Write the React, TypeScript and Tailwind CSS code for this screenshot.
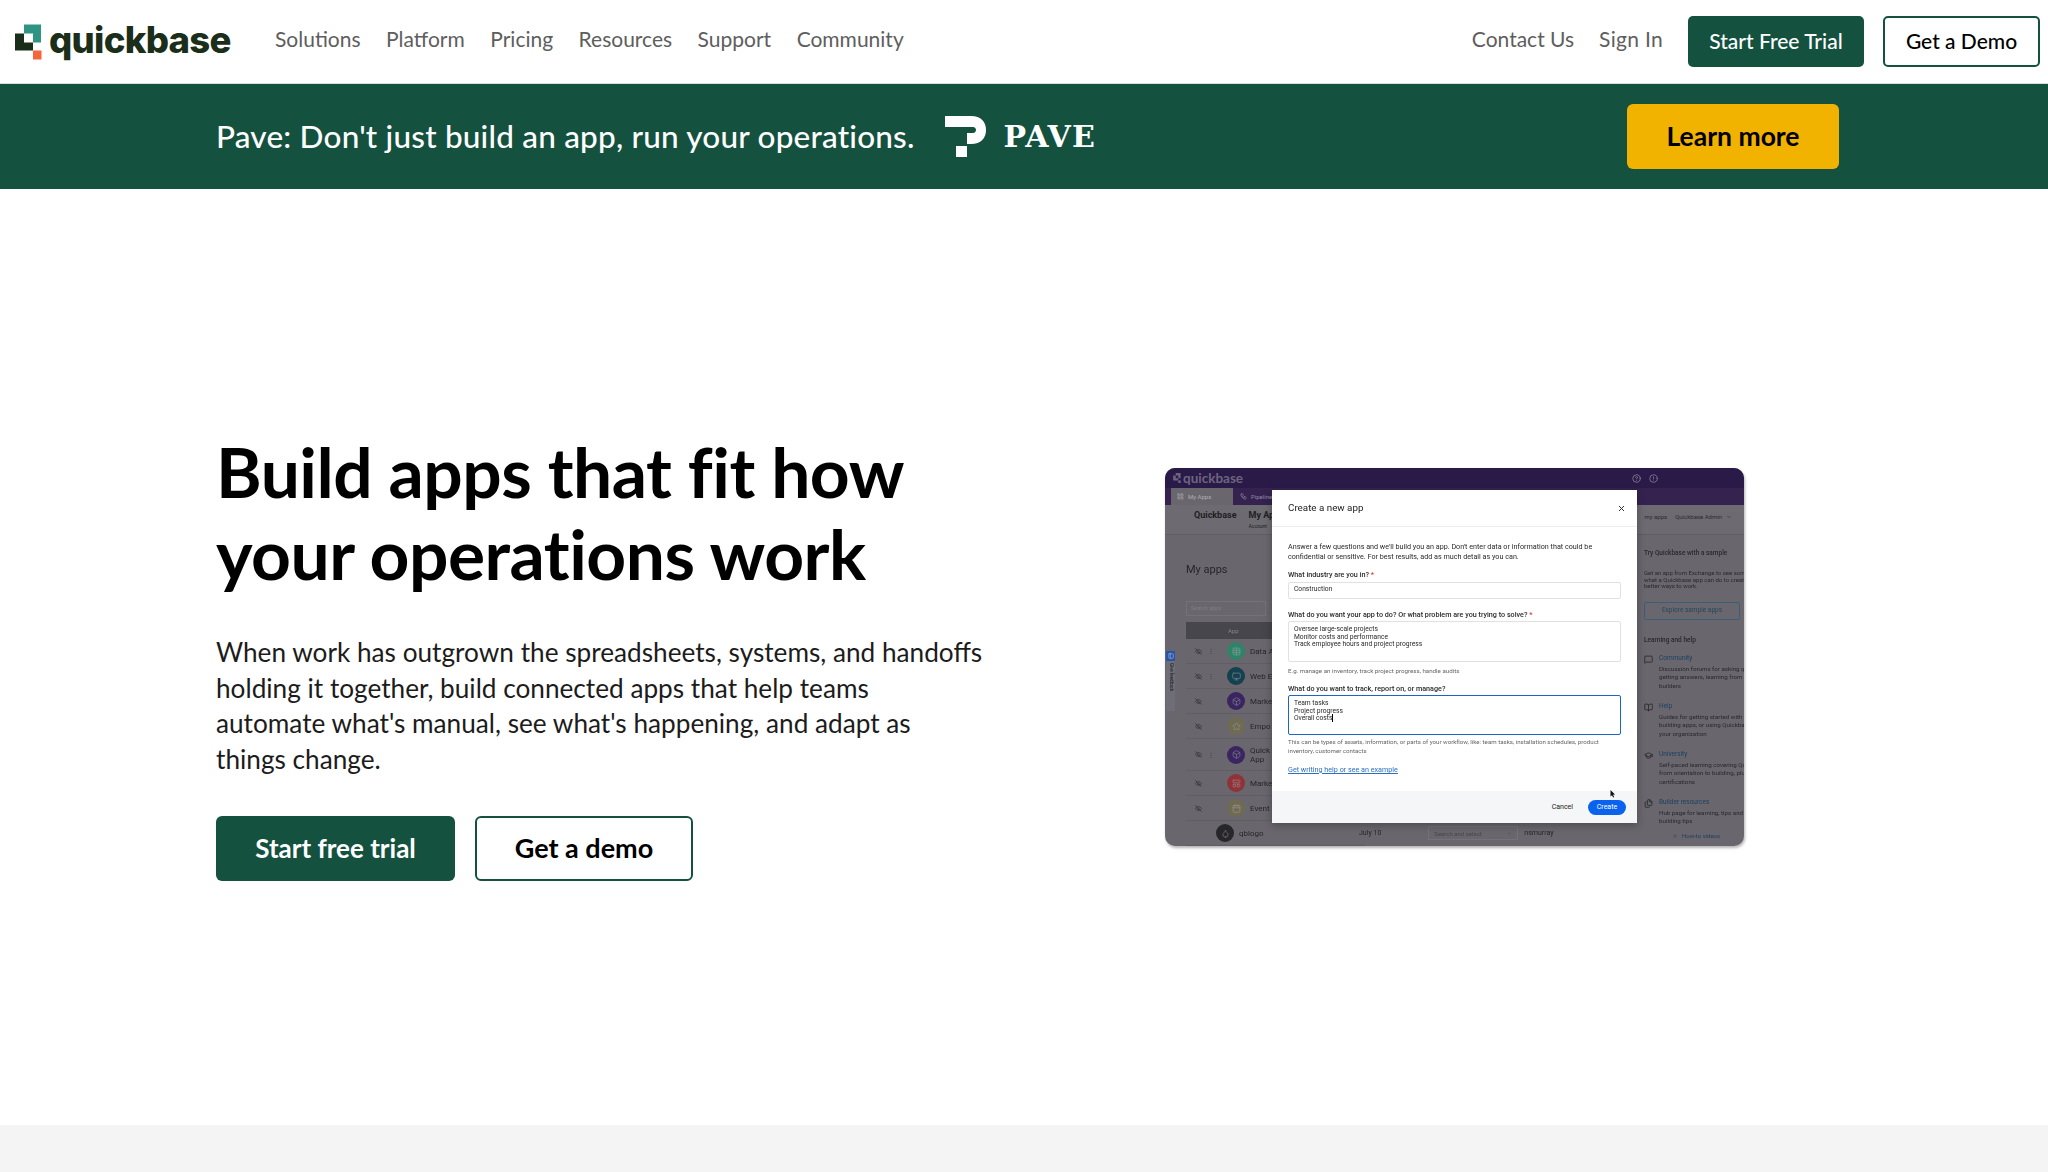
import { EyeOff, LayoutGrid, Workflow, X, MessageSquare, BookOpen, GraduationCap, Files, ChevronsUp, HelpCircle, AlertCircle, ChevronDown, Table, Monitor, Box, Star, LayoutPanelTop, Calendar, Droplet, PanelLeft } from 'lucide-react';

const navLinks = ['Solutions', 'Platform', 'Pricing', 'Resources', 'Support', 'Community'];

// rows of the dimmed app table behind the modal
const appRows = [
  { name: 'Data A', color: 'bg-[#2f8468]', Icon: Table, dots: true, h: 'h-[25px]' },
  { name: 'Web E', color: 'bg-[#14414f]', Icon: Monitor, dots: true, h: 'h-[25px]' },
  { name: 'Marke', color: 'bg-[#3a2560]', Icon: Box, dots: false, h: 'h-[25px]' },
  { name: 'Empo', color: 'bg-[#6f6a52]', Icon: Star, dots: false, h: 'h-[25px]' },
  { name: 'Quick App', color: 'bg-[#3a2560]', Icon: Box, dots: true, h: 'h-[32px]' },
  { name: 'Marke', color: 'bg-[#8f3338]', Icon: LayoutPanelTop, dots: false, h: 'h-[25px]' },
  { name: 'Event', color: 'bg-[#6f6a52]', Icon: Calendar, dots: false, h: 'h-[25px]' },
  { name: 'qblogo', color: 'bg-[#26262b]', Icon: Droplet, dots: false, h: 'h-[25px]' },
];

const helpLinks = [
  { title: 'Community', Icon: MessageSquare, text: 'Discussion forums for asking questions, getting answers, learning from fellow builders' },
  { title: 'Help', Icon: BookOpen, text: 'Guides for getting started with apps, building apps, or using Quickbase at your organization' },
  { title: 'University', Icon: GraduationCap, text: 'Self-paced learning covering Quickbase, from orientation to building, plus certifications' },
  { title: 'Builder resources', Icon: Files, text: 'Hub page for learning, tips and app building tips' },
];

function Logo() {
  return (
    <div className="flex w-[217px] shrink-0 items-center pb-[3px]">
      <svg width="27" height="36" viewBox="15 23 27 35" className="mt-[3px] shrink-0">
        <polygon points="24,23 41,23 41,41 33,41 33,32 24,32" fill="#2f9484" />
        <polygon points="15,32 24,32 24,41 33,41 33,49 15,49" fill="#1a2e1a" />
        <rect x="33" y="49" width="8.5" height="9" fill="#f4653a" />
      </svg>
      <span className="ml-[7px] font-['Inter'] text-[36.5px] leading-none font-extrabold tracking-[-0.7px] text-[#1a2e1a]">quickbase</span>
    </div>
  );
}

function PaveLogo() {
  return (
    <div className="flex items-center">
      <svg width="42" height="42" viewBox="24 15 42 42" className="shrink-0">
        <path d="M24 15 H50 C60 15 65 21 65 29 C65 37 60 43 50 43 H46 V32 H52 C54 32 55 30.5 55 29 C55 27.5 54 26 52 26 H24 Z" fill="#fff" />
        <path d="M46 32 V43 H46 V56 H35 V45 H46 V32 Z" fill="#fff" />
      </svg>
      <span className="ml-[17px] font-['DejaVu_Serif'] text-[30px] leading-none font-bold tracking-[1.2px] text-white">PAVE</span>
    </div>
  );
}

function AppMock() {
  return (
    <div className="relative h-[378px] w-[579px] shrink-0 overflow-hidden rounded-[10px] bg-[#69676d] font-['Roboto'] shadow-[1px_2px_3px_rgba(0,0,0,0.3)]">
      <div className="flex h-full flex-col blur-[0.35px]">
        {/* purple top bar */}
        <div className="flex h-[22px] items-center justify-between bg-[#2a1a48] pr-[86px] pl-[8px]">
          <span className="flex items-center gap-[2px] font-['Lato'] text-[13.5px] font-bold text-[#6d6580]">
            <svg width="8" height="10" viewBox="15 23 27 35">
              <polygon points="24,23 41,23 41,41 33,41 33,32 24,32" fill="#6d6580" />
              <polygon points="15,32 24,32 24,41 33,41 33,49 15,49" fill="#6d6580" />
              <rect x="33" y="49" width="8.5" height="9" fill="#6d6580" />
            </svg>
            quickbase
          </span>
          <div className="flex items-center gap-2 text-[#8d87a0]">
            <HelpCircle size={9} />
            <AlertCircle size={9} />
          </div>
        </div>
        <div className="flex h-[20px] items-end bg-[#35224f] pl-[6px]">
          <div className="flex h-[17px] w-[62px] items-center gap-1 bg-[#69676d] pl-[6px] text-[6px] text-[#b0aeb4]">
            <LayoutGrid size={7} /> My Apps
          </div>
          <div className="flex h-[17px] items-center gap-1 pl-[7px] text-[6px] text-[#8f88a3]">
            <Workflow size={7} /> Pipelines
          </div>
        </div>
        <div className="flex h-[34px] items-start justify-between border-b border-[#5f5d63] bg-[#6d6b71] pt-[5px] pr-[12px] pl-[29px] text-[#1f1e24]">
          <div className="flex gap-[12px] text-[9px] font-bold">
            <span className="leading-[10px]">Quickbase</span>
            <span className="leading-[10px]">My Apps<br /><span className="text-[5px] font-normal">Account</span></span>
          </div>
          <span className="mt-[2px] flex items-center gap-1 text-[6px] text-[#2b2a30]">
            my apps <span className="ml-1">Quickbase Admin</span> <ChevronDown size={6} />
          </span>
        </div>
        <div className="flex flex-1 justify-between">
          {/* table */}
          <div className="w-[200px] pt-[27px] pl-[21px]">
            <div className="text-[11px] leading-[15px] text-[#26252b]">My apps</div>
            <div className="mt-[24px] flex h-[15px] w-[80px] items-center border border-[#747279] pl-1 text-[5.5px] text-[#807e85]">Search apps</div>
            <div className="mt-[6px] flex h-[17px] items-center bg-[#47464d] pl-[42px] text-[6px] text-[#85838a]">App</div>
            {appRows.map((row, i) => (
              <div key={i} className={`flex items-center border-b border-[#605e64] ${row.h}`}>
                <EyeOff size={7} className="ml-[9px] text-[#2a292e]" />
                <span className="ml-[6px] w-[4px] text-[6px] leading-none text-[#333238]">{row.dots ? '⋮' : ''}</span>
                <span className={`ml-[15px] flex size-[18px] shrink-0 items-center justify-center rounded-full ${row.color}`}>
                  <row.Icon size={9} className="text-[#a9a7ad] opacity-60" />
                </span>
                <span className="ml-[5px] w-[30px] shrink-0 text-[8px] leading-[9px] text-[#26252b]">{row.name}</span>
                {row.name === 'qblogo' && (
                  <>
                    <span className="ml-[90px] shrink-0 text-[7px] whitespace-nowrap text-[#26252b]">July 10</span>
                    <span className="ml-[47px] flex h-[14px] w-[90px] shrink-0 items-center justify-between border border-[#747279] px-[5px] text-[6px] whitespace-nowrap text-[#47464c]">
                      Search and select <ChevronDown size={5} />
                    </span>
                    <span className="ml-[6px] shrink-0 text-[7px] text-[#26252b]">nsmurray</span>
                  </>
                )}
              </div>
            ))}
          </div>
          {/* help column */}
          <div className="w-[101px] overflow-hidden pt-[14px] pl-[1px] text-[#29282e]">
            <div className="text-[6.5px] font-medium whitespace-nowrap">Try Quickbase with a sample</div>
            <div className="mt-[11px] w-[112px] text-[6px] leading-[6.8px]">Get an app from Exchange to see some of what a Quickbase app can do to create better ways to work.</div>
            <div className="mt-[12px] flex h-[18px] w-[96px] items-center justify-center rounded-[2px] border border-[#3a5f78] text-[6.5px] text-[#26465c]">Explore sample apps</div>
            <div className="mt-[16px] text-[6.5px] font-medium">Learning and help</div>
            <div className="mt-[8px]">
              {helpLinks.map(({ title, Icon, text }) => (
                <div key={title} className="flex h-[48px] gap-[6px]">
                  <Icon size={9} className="mt-[1px] shrink-0 text-[#222126]" />
                  <div className="w-[112px] shrink-0">
                    <div className="text-[6.5px] leading-[8px] text-[#1d3f60]">{title}</div>
                    <div className="mt-[3px] text-[6.2px] leading-[8.6px]">{text}</div>
                  </div>
                </div>
              ))}
            </div>
          </div>
        </div>
      </div>

      {/* feedback tab */}
      <div className="absolute top-[183px] left-[1px] flex h-[60px] w-[9px] flex-col items-center rounded-r-[1px] bg-[#6f6e78]">
        <div className="flex h-[10px] w-full items-center justify-center bg-[#2855a5] text-[#b9c7e2]">
          <PanelLeft size={6} />
        </div>
        <span className="mt-[2px] text-[4.5px] whitespace-nowrap text-[#1c1c20] [writing-mode:vertical-rl]">Give feedback</span>
      </div>

      {/* how-to pill */}
      <div className="absolute bottom-[6px] left-[507px] flex items-center gap-1 text-[6px] text-[#1d3f60]">
        <ChevronsUp size={6} /> How-to videos
      </div>

      {/* modal */}
      <div className="absolute top-[22px] left-[107px] flex h-[333px] w-[365px] flex-col bg-white text-[#2a2a2a] shadow-[0_2px_8px_rgba(0,0,0,0.3)]">
        <div className="flex h-[37px] shrink-0 items-center justify-between border-b border-[#eceef0] pr-[11px] pl-[16px]">
          <span className="text-[9.8px] text-[#222]">Create a new app</span>
          <X size={9} strokeWidth={2.5} className="text-[#222]" />
        </div>
        <div className="flex-1 px-[16px] pt-[15px] text-[7.2px] leading-[9.5px]">
          <p className="whitespace-nowrap">Answer a few questions and we'll build you an app. Don't enter data or information that could be<br />confidential or sensitive. For best results, add as much detail as you can.</p>
          <div className="mt-[9px] font-medium">What industry are you in? <span className="text-[#d33]">*</span></div>
          <div className="mt-[2px] flex h-[17px] w-[333px] items-center rounded-[2px] border border-[#dfe1e4] pl-[5px] text-[6.7px]">Construction</div>
          <div className="mt-[11px] font-medium">What do you want your app to do? Or what problem are you trying to solve? <span className="text-[#d33]">*</span></div>
          <div className="mt-[2px] h-[41px] w-[333px] rounded-[2px] border border-[#dfe1e4] pt-[4px] pl-[5px] text-[6.7px] leading-[7.5px]">
            Oversee large-scale projects<br />Monitor costs and performance<br />Track employee hours and project progress
          </div>
          <div className="mt-[5px] text-[6.2px] text-[#666]">E.g. manage an inventory, track project progress, handle audits</div>
          <div className="mt-[7px] font-medium">What do you want to track, report on, or manage?</div>
          <div className="mt-[2px] h-[40px] w-[333px] rounded-[2px] border-[1.5px] border-[#1b65c4] pt-[4px] pl-[5px] text-[6.7px] leading-[7.5px]">
            Team tasks<br />Project progress<br /><span className="border-r border-black">Overall costs</span>
          </div>
          <div className="mt-[3px] text-[6.15px] leading-[8.5px] text-[#666]">This can be types of assets, information, or parts of your workflow, like: team tasks, installation schedules, product<br />inventory, customer contacts</div>
          <div className="mt-[10px] text-[7.2px] text-[#2a6fc0] underline">Get writing help or see an example</div>
        </div>
        <div className="relative flex h-[32px] shrink-0 items-center justify-end gap-[15px] bg-[#f5f6f7] pr-[11px] text-[7px]">
          <span className="text-[#222]">Cancel</span>
          <span className="flex h-[15px] w-[38px] items-center justify-center rounded-full bg-[#0a62ee] text-white">Create</span>
          {/* cursor */}
          <svg width="6" height="8" viewBox="0 0 6 8" className="absolute top-[-1px] right-[21px]">
            <path d="M0.5 0 L0.5 6.5 L2 5.2 L3.2 7.6 L4.2 7 L3 4.8 L5 4.6 Z" fill="#111" />
          </svg>
        </div>
      </div>
    </div>
  );
}

export default function App() {
  return (
    <div className="min-h-[1172px] bg-white font-['Lato',sans-serif]">
      <header className="flex h-[84px] items-center justify-between border-b border-[#dcdcdc] pr-[8px] pl-[15px]">
        <div className="flex items-center">
          <Logo />
          <nav className="ml-[43px] flex gap-[25.5px] pb-[5px] text-[21px] text-[#5e5e5e]">
            {navLinks.map(l => (
              <span key={l}>{l}</span>
            ))}
          </nav>
        </div>
        <div className="flex items-center text-[21px]">
          <span className="pb-[5px] text-[#5e5e5e]">Contact Us</span>
          <span className="ml-[25px] pb-[5px] tracking-[0.3px] text-[#5e5e5e]">Sign In</span>
          <button className="ml-[25px] h-[51px] w-[176px] rounded-[5px] bg-[#14513f] pb-[2px] font-medium text-white">Start Free Trial</button>
          <button className="ml-[19px] h-[51px] w-[157px] rounded-[5px] border-2 border-[#14513f] bg-white pb-[2px] font-medium text-black">Get a Demo</button>
        </div>
      </header>

      <div className="flex h-[105px] items-center justify-between bg-[#14513f] pr-[209px] pl-[216px]">
        <div className="flex items-center">
          <span className="text-[31.5px] font-medium tracking-[0.2px] text-white">Pave: Don't just build an app, run your operations.</span>
          <div className="ml-[30px]">
            <PaveLogo />
          </div>
        </div>
        <button className="h-[65px] w-[212px] rounded-[6px] bg-[#f2b200] text-[26.5px] font-bold text-black">Learn more</button>
      </div>

      <main className="flex h-[936px] items-center justify-between pr-[304px] pb-[3px] pl-[216px]">
        <div className="w-[790px]">
          <h1 className="text-[69.5px] leading-[82px] font-bold tracking-[-0.5px] text-black">
            Build apps that fit how<br />your operations work
          </h1>
          <p className="mt-[41px] text-[26.2px] leading-[35.5px] text-[#1c1c1c]">
            When work has outgrown the spreadsheets, systems, and handoffs<br />
            holding it together, build connected apps that help teams<br />
            automate what's manual, see what's happening, and adapt as<br />
            things change.
          </p>
          <div className="mt-[39px] flex gap-[20px]">
            <button className="h-[65px] w-[239px] rounded-[6px] bg-[#14513f] text-[26px] font-bold text-white">Start free trial</button>
            <button className="h-[65px] w-[218px] rounded-[6px] border-2 border-[#14513f] bg-white text-[27px] font-bold text-black">Get a demo</button>
          </div>
        </div>
        <div className="mt-[3px]">
          <AppMock />
        </div>
      </main>

      <div className="h-[47px] bg-[#f4f4f4]" />
    </div>
  );
}
